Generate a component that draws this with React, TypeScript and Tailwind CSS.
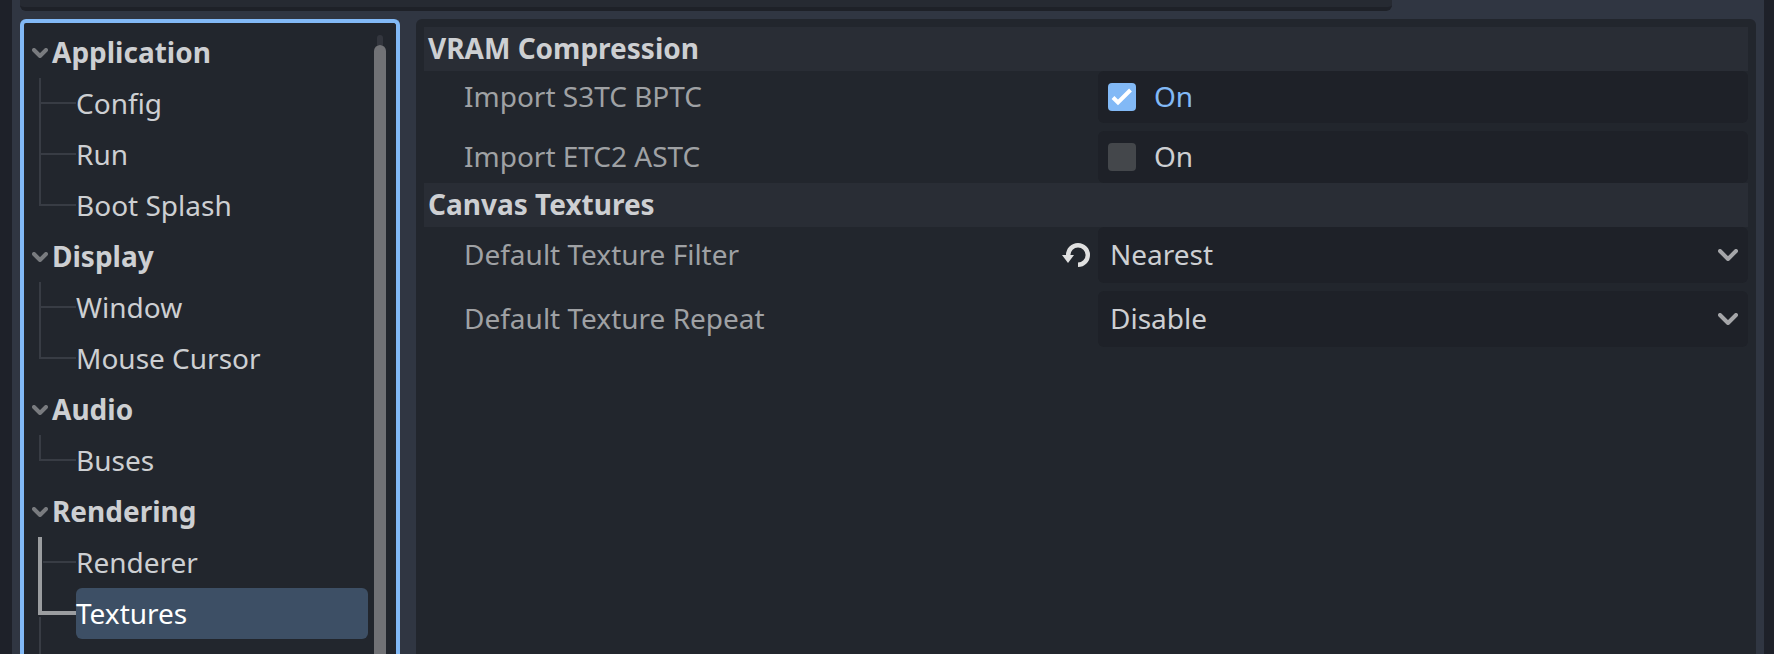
import { useState } from "react";

type Item = { label: string; selected?: boolean };
type Group = { label: string; items: Item[]; more?: boolean };

const groups: Group[] = [
  { label: "Application", items: [{ label: "Config" }, { label: "Run" }, { label: "Boot Splash" }] },
  { label: "Display", items: [{ label: "Window" }, { label: "Mouse Cursor" }] },
  { label: "Audio", items: [{ label: "Buses" }] },
  { label: "Rendering", items: [{ label: "Renderer" }, { label: "Textures", selected: true }], more: true },
];

function Chevron({ className }: { className: string }) {
  return (
    <svg viewBox="0 0 16 10" className={className} fill="none" stroke="currentColor" strokeWidth="4" strokeLinecap="round" strokeLinejoin="round" aria-hidden="true">
      <path d="M2 2l6 6 6-6" />
    </svg>
  );
}

/* Connector lines to the left of a tree item */
function Branch({ mode }: { mode: "mid" | "last" | "beside" | "selected" }) {
  const dim = "#383c44";
  return (
    <svg viewBox="0 0 44 51" className="h-[51px] w-11 shrink-0" shapeRendering="crispEdges" aria-hidden="true">
      {mode === "mid" && <path fill={dim} d="M7 0h2v51h-2zM9 24h35v2H9z" />}
      {mode === "last" && <path fill={dim} d="M7 0h2v26h-2zM9 24h35v2H9z" />}
      {mode === "beside" && (
        <>
          <path fill="#9b9da0" d="M6 0h4v51H6z" />
          <path fill={dim} d="M11 24h33v2H11z" />
        </>
      )}
      {mode === "selected" && (
        <>
          <path fill="#9b9da0" d="M6 0h4v23h34v4H6z" />
          <path fill={dim} d="M7 29h2v22h-2z" />
        </>
      )}
    </svg>
  );
}

function Tree() {
  return (
    <ul className="min-w-0 flex-1 pt-1">
      {groups.map((g) => (
        <li key={g.label}>
          <button type="button" className="flex h-[51px] w-full items-center gap-1 text-left font-bold">
            <Chevron className="h-[10px] w-4 shrink-0 text-[#797b7f]" />
            <span className="pb-0.5">{g.label}</span>
          </button>
          <ul>
            {g.items.map((it, i) => {
              const last = i === g.items.length - 1 && !g.more;
              const mode = it.selected ? "selected" : g.more ? "beside" : last ? "last" : "mid";
              return (
                <li key={it.label} className="flex">
                  <Branch mode={mode} />
                  <button
                    type="button"
                    className={
                      it.selected
                        ? "h-[51px] flex-1 rounded-md bg-[#3d4f65] pb-0.5 text-left text-white"
                        : "h-[51px] flex-1 rounded-md pb-0.5 text-left"
                    }
                  >
                    {it.label}
                  </button>
                </li>
              );
            })}
          </ul>
          {g.more && (
            <svg viewBox="0 0 44 51" className="h-[51px] w-11" shapeRendering="crispEdges" aria-hidden="true">
              <path fill="#383c44" d="M7 0h2v51h-2z" />
            </svg>
          )}
        </li>
      ))}
    </ul>
  );
}

function SectionTitle({ children }: { children: string }) {
  return <h2 className="flex h-11 items-center bg-[#292d35] px-1 pb-0.5 font-bold">{children}</h2>;
}

function CheckRow({ id, label, initial }: { id: string; label: string; initial: boolean }) {
  const [on, setOn] = useState(initial);
  return (
    <div className="grid grid-cols-[674fr_650fr] items-center">
      <label htmlFor={id} className="pb-0.5 pl-10 text-[#9fa1a4]">
        {label}
      </label>
      <label className="flex h-[52px] items-center gap-[18px] rounded-md bg-[#1e2128] px-[10px]">
        <span className="grid size-7 shrink-0">
          <input
            id={id}
            type="checkbox"
            checked={on}
            onChange={(e) => setOn(e.target.checked)}
            className="col-start-1 row-start-1 size-7 appearance-none rounded bg-[#44474b] checked:bg-[#82b9f6]"
          />
          {on && (
            <svg viewBox="0 0 28 28" className="pointer-events-none col-start-1 row-start-1 size-7" fill="none" stroke="#fff" strokeWidth="4" aria-hidden="true">
              <path d="M5 14.500l5 5L22.500 7" />
            </svg>
          )}
        </span>
        <span className={on ? "pb-0.5 text-[#82b9f6]" : "pb-0.5"}>On</span>
      </label>
    </div>
  );
}

function SelectRow({ id, label, options, modified }: { id: string; label: string; options: string[]; modified?: boolean }) {
  return (
    <div className="grid grid-cols-[674fr_650fr] items-center">
      <div className="flex items-center justify-between pr-2 pl-10">
        <label htmlFor={id} className="pb-0.5 text-[#9fa1a4]">
          {label}
        </label>
        {modified && (
          <button type="button" aria-label="Reset to default">
            <svg viewBox="0 0 28 26" className="h-[26px] w-7" aria-hidden="true">
              <path d="M6.200 13A9.800 9.800 0 1 1 16 22.800" fill="none" stroke="#e0e0e0" strokeWidth="4.400" />
              <path d="M0 13h12l-6 8z" fill="#e0e0e0" />
            </svg>
          </button>
        )}
      </div>
      <div className="grid items-center">
        <select
          id={id}
          className="col-start-1 row-start-1 h-14 w-full appearance-none rounded-md bg-[#1e2128] px-3 pb-0.5"
        >
          {options.map((o) => (
            <option key={o}>{o}</option>
          ))}
        </select>
        <svg viewBox="0 0 20 12" className="pointer-events-none col-start-1 row-start-1 mr-[10px] h-3 w-5 justify-self-end" fill="none" stroke="#a5a6a9" strokeWidth="4" strokeLinecap="round" strokeLinejoin="round" aria-hidden="true">
          <path d="M2 2l8 8 8-8" />
        </svg>
      </div>
    </div>
  );
}

export default function App() {
  return (
    <div className="flex h-screen flex-col overflow-hidden bg-[#1e2129] pr-[10px] pl-3 font-['Noto_Sans',sans-serif] text-[28px] leading-9 text-[#cdcfd2]">
      <div className="flex min-h-0 flex-1 flex-col gap-2 bg-[#303642] px-2">
        <div className="mr-[364px] h-[11px] shrink-0 rounded-b-md border-b-4 border-[#1e2128] bg-[#262a32]" />
        <div className="flex min-h-0 flex-1 gap-4">
          <nav className="flex w-[380px] shrink-0 overflow-hidden rounded-t-md border-4 border-b-0 border-[#82b9f6] bg-[#22262d] pr-[10px] pl-2">
            <Tree />
            <div className="ml-[6px] flex w-3 flex-col items-center pt-3">
              <div className="h-[10px] w-[6px] shrink-0 rounded-t-sm bg-[#33363e]" />
              <div className="w-3 flex-1 rounded-t-full bg-[#717276]" />
            </div>
          </nav>
          <main className="min-w-0 flex-1 rounded-t-md bg-[#22262d] p-2">
            <SectionTitle>VRAM Compression</SectionTitle>
            <div className="flex flex-col gap-2">
              <CheckRow id="s3tc" label="Import S3TC BPTC" initial={true} />
              <CheckRow id="etc2" label="Import ETC2 ASTC" initial={false} />
            </div>
            <SectionTitle>Canvas Textures</SectionTitle>
            <div className="flex flex-col gap-2">
              <SelectRow id="filter" label="Default Texture Filter" options={["Nearest", "Linear"]} modified />
              <SelectRow id="repeat" label="Default Texture Repeat" options={["Disable", "Enable", "Mirror"]} />
            </div>
          </main>
        </div>
      </div>
    </div>
  );
}
